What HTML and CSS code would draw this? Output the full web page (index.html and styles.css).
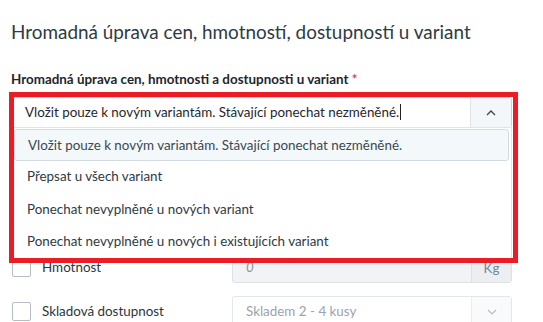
FILE: index.html
```html
<!DOCTYPE html>
<html lang="cs">
<head>
<meta charset="utf-8">
<title>Hromadná úprava</title>
<link rel="stylesheet" href="styles.css">
</head>
<body>
<div class="page">
  <h1 class="title">Hromadná úprava cen, hmotností, dostupností u variant</h1>
  <label class="field-label">Hromadná úprava cen, hmotnosti a dostupnosti u variant <span class="req">*</span></label>
  <div class="combo">
    <div class="select open">
      <span class="select-value">Vložit pouze k novým variantám. Stávající ponechat nezměněné.<span class="caret"></span></span>
      <span class="select-btn">
        <svg width="10" height="6" viewBox="0 0 10 6"><path d="M1 5 L5 1 L9 5" fill="none" stroke="#3a4550" stroke-width="1.3"/></svg>
      </span>
    </div>
    <ul class="menu">
      <li class="option active">Vložit pouze k novým variantám. Stávající ponechat nezměněné.</li>
      <li class="option">Přepsat u všech variant</li>
      <li class="option">Ponechat nevyplněné u nových variant</li>
      <li class="option">Ponechat nevyplněné u nových i existujících variant</li>
    </ul>
    <div class="highlight"></div>
  </div>
  <div class="rows">
    <div class="row">
      <span class="check"></span>
      <span class="row-label">Hmotnost</span>
      <div class="input disabled">
        <span class="input-value">0</span>
        <span class="addon">Kg</span>
      </div>
    </div>
    <div class="row">
      <span class="check"></span>
      <span class="row-label">Skladová dostupnost</span>
      <div class="input">
        <span class="input-value plain">Skladem 2 - 4 kusy</span>
        <span class="addon btn">
          <svg width="10" height="6" viewBox="0 0 10 6"><path d="M1 1 L5 5 L9 1" fill="none" stroke="#b5bcc3" stroke-width="1.2"/></svg>
        </span>
      </div>
    </div>
  </div>
</div>
</body>
</html>
```
FILE: styles.css
```css
* { box-sizing: border-box; }
html, body { margin: 0; padding: 0; background: #fff; }
body {
  font-family: Lato, "Noto Sans", sans-serif;
  color: #2b3640;
}
.page {
  padding: 19px 31px 0 11px;
}
.title {
  margin: 0;
  font-size: 18.9px;
  font-weight: 400;
  line-height: 26px;
  color: #2e3a44;
}
.field-label {
  display: block;
  margin-top: 26px;
  font-size: 13.4px;
  font-weight: 700;
  line-height: 16px;
  color: #1f262c;
}
.req { color: #d6454f; }
.combo {
  position: relative;
  margin-top: 10px;
}
.select {
  display: flex;
  height: 31px;
  border: 1px solid #c9d1d8;
  border-radius: 3px;
  background: #fff;
}
.select-value {
  flex: 1;
  padding: 0 0 0 13px;
  font-size: 13.4px;
  line-height: 29px;
  color: #1f262c;
  white-space: nowrap;
}
.caret {
  display: inline-block;
  width: 1px;
  height: 16px;
  background: #222;
  vertical-align: -3px;
  margin-left: 1px;
}
.select-btn {
  width: 41px;
  display: flex;
  align-items: center;
  justify-content: center;
  background: #f4f7fa;
  border-left: 1px solid #dfe4e8;
}
.menu {
  position: absolute;
  left: 0;
  right: 0;
  top: 30px;
  margin: 0;
  padding: 1px 2px 2px 2px;
  list-style: none;
  background: #fff;
  border: 1px solid #dfe4e8;
  z-index: 2;
}
.option {
  height: 32.5px;
  padding: 0 13px;
  font-size: 13.4px;
  line-height: 31px;
  color: #2e3a44;
  white-space: nowrap;
}
.option.active {
  height: 32px;
  background: #f3f8fb;
  border: 1px solid #d3dbe2;
  border-radius: 3px;
  line-height: 30px;
  color: #3b4852;
}
.highlight {
  position: absolute;
  left: -2px;
  right: -6px;
  top: -5px;
  height: 171px;
  border: 5px solid #ea1c26;
  z-index: 3;
  pointer-events: none;
}
.rows {
  margin-top: 124px;
  display: flex;
  flex-direction: column;
  gap: 14px;
}
.row {
  display: flex;
  align-items: center;
  height: 30px;
}
.check {
  width: 19px;
  height: 19px;
  margin-left: 1px;
  border: 1px solid #b6bdc4;
  border-radius: 2px;
  background: #fff;
}
.row-label {
  width: 201px;
  padding-left: 11px;
  font-size: 13.4px;
  color: #2b3640;
}
.input {
  flex: 1;
  display: flex;
  height: 31px;
  border: 1px solid #e3e7eb;
  border-radius: 3px;
  background: #fff;
  align-self: flex-start;
}
.input.disabled {
  background: #f1f3f6;
  border-color: #dde2e6;
}
.input-value {
  flex: 1;
  padding-left: 13px;
  font-size: 13.4px;
  line-height: 29px;
  color: #8c96a0;
  font-style: italic;
}
.input-value.plain {
  font-style: normal;
  color: #9aa3ab;
}
.addon {
  width: 40px;
  display: flex;
  align-items: center;
  justify-content: center;
  background: #eceef0;
  border-left: 1px solid #dde2e6;
  font-size: 13.4px;
  color: #6e8aa3;
}
.addon.btn {
  background: #f8fafc;
  border-left-color: #e9edf0;
}
```
